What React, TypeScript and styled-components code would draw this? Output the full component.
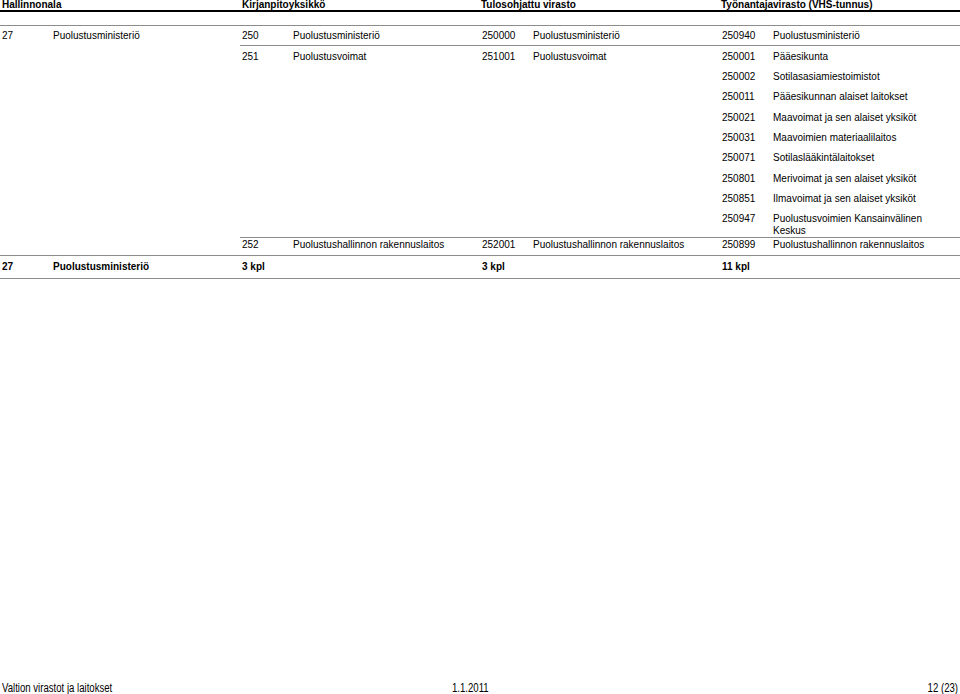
import React from "react";
import styled, { createGlobalStyle } from "styled-components";

const LINE = "#8c8c8c";

const GlobalStyle = createGlobalStyle`
  html, body {
    margin: 0;
    padding: 0;
    background: #fff;
    overflow: hidden;
  }
  body {
    font-family: "Liberation Sans", Arial, sans-serif;
    color: #000;
  }
`;

type Employer = [string, string];
type Agency = { code: string; name: string; employers: Employer[] };
type Unit = { code: string; name: string; compact?: boolean; agencies: Agency[] };

const units: Unit[] = [
  {
    code: "250",
    name: "Puolustusministeriö",
    agencies: [
      { code: "250000", name: "Puolustusministeriö", employers: [["250940", "Puolustusministeriö"]] },
    ],
  },
  {
    code: "251",
    name: "Puolustusvoimat",
    agencies: [
      {
        code: "251001",
        name: "Puolustusvoimat",
        employers: [
          ["250001", "Pääesikunta"],
          ["250002", "Sotilasasiamiestoimistot"],
          ["250011", "Pääesikunnan alaiset laitokset"],
          ["250021", "Maavoimat ja sen alaiset yksiköt"],
          ["250031", "Maavoimien materiaalilaitos"],
          ["250071", "Sotilaslääkintälaitokset"],
          ["250801", "Merivoimat ja sen alaiset yksiköt"],
          ["250851", "Ilmavoimat ja sen alaiset yksiköt"],
          ["250947", "Puolustusvoimien Kansainvälinen Keskus"],
        ],
      },
    ],
  },
  {
    code: "252",
    name: "Puolustushallinnon rakennuslaitos",
    compact: true,
    agencies: [
      {
        code: "252001",
        name: "Puolustushallinnon rakennuslaitos",
        employers: [["250899", "Puolustushallinnon rakennuslaitos"]],
      },
    ],
  },
];

const headings = [
  { label: "Hallinnonala", pl: 2 },
  { label: "Kirjanpitoyksikkö", pl: 2 },
  { label: "Tulosohjattu virasto", pl: 1 },
  { label: "Työnantajavirasto (VHS-tunnus)", pl: 1 },
];

const Page = styled.div`
  display: flex;
  flex-direction: column;
  width: 960px;
  height: 694px;
`;

const Table = styled.div`
  font-size: 10px;
  line-height: 11.5px;
`;

const HeaderRow = styled.div`
  display: grid;
  grid-template-columns: repeat(4, 240px);
  height: 10px;
  border-bottom: 2px solid #000;
  margin-bottom: 13px;
`;

const HeadCell = styled.div<{ $pl: number }>`
  padding-left: ${(p) => p.$pl}px;
  font-weight: bold;
  line-height: 10px;
  white-space: nowrap;
`;

const Group = styled.div<{ $closed?: boolean }>`
  display: flex;
  box-shadow: inset 0 1px 0 ${LINE}${(p) => (p.$closed ? `, inset 0 -1px 0 ${LINE}` : "")};
`;

const Stack = styled.div`
  flex: 1;
  display: flex;
  flex-direction: column;
`;

const Cell = styled.div<{ $compact?: boolean; $total?: boolean }>`
  box-sizing: border-box;
  width: 240px;
  flex: none;
  display: flex;
  align-items: flex-start;
  padding: ${(p) => (p.$total ? "6px 20px 6.5px 2px" : p.$compact ? "1.8px 20px 1px 2px" : "5.3px 20px 1px 2px")};
  min-height: ${(p) => (p.$compact ? "18px" : "20.33px")};
  font-weight: ${(p) => (p.$total ? "bold" : "normal")};
`;

const Code = styled.span`
  width: 51px;
  flex: none;
`;

const Name = styled.span`
  flex: 1;
`;

const Footer = styled.footer`
  margin-top: auto;
  display: grid;
  grid-template-columns: 450px 1fr auto;
  padding: 0 2px;
  font-size: 12px;
  line-height: 12px;
  white-space: nowrap;
`;

/* no narrow face installed: squeeze the regular one to Arial Narrow widths */
const FooterText = styled.span<{ $origin: "left" | "right" }>`
  display: inline-block;
  transform: scaleX(0.8);
  transform-origin: ${(p) => p.$origin} center;
  justify-self: ${(p) => (p.$origin === "right" ? "end" : "start")};
`;

function Pair({ code, name, compact, total }: { code: string; name?: string; compact?: boolean; total?: boolean }) {
  return (
    <Cell $compact={compact} $total={total}>
      <Code>{code}</Code>
      {name && <Name>{name}</Name>}
    </Cell>
  );
}

export default function App() {
  return (
    <Page>
      <GlobalStyle />
      <Table>
        <HeaderRow>
          {headings.map((h) => (
            <HeadCell key={h.label} $pl={h.pl}>
              {h.label}
            </HeadCell>
          ))}
        </HeaderRow>

        <Group>
          <Pair code="27" name="Puolustusministeriö" />
          <Stack>
            {units.map((u) => (
              <Group key={u.code}>
                <Pair code={u.code} name={u.name} compact={u.compact} />
                <Stack>
                  {u.agencies.map((a) => (
                    <Group key={a.code}>
                      <Pair code={a.code} name={a.name} compact={u.compact} />
                      <Stack>
                        {a.employers.map(([code, name]) => (
                          <Pair key={code} code={code} name={name} compact={u.compact} />
                        ))}
                      </Stack>
                    </Group>
                  ))}
                </Stack>
              </Group>
            ))}
          </Stack>
        </Group>

        <Group $closed>
          <Pair code="27" name="Puolustusministeriö" total />
          <Pair code="3 kpl" total />
          <Pair code="3 kpl" total />
          <Pair code="11 kpl" total />
        </Group>
      </Table>

      <Footer>
        <FooterText $origin="left">Valtion virastot ja laitokset</FooterText>
        <FooterText $origin="left">1.1.2011</FooterText>
        <FooterText $origin="right">12 (23)</FooterText>
      </Footer>
    </Page>
  );
}
